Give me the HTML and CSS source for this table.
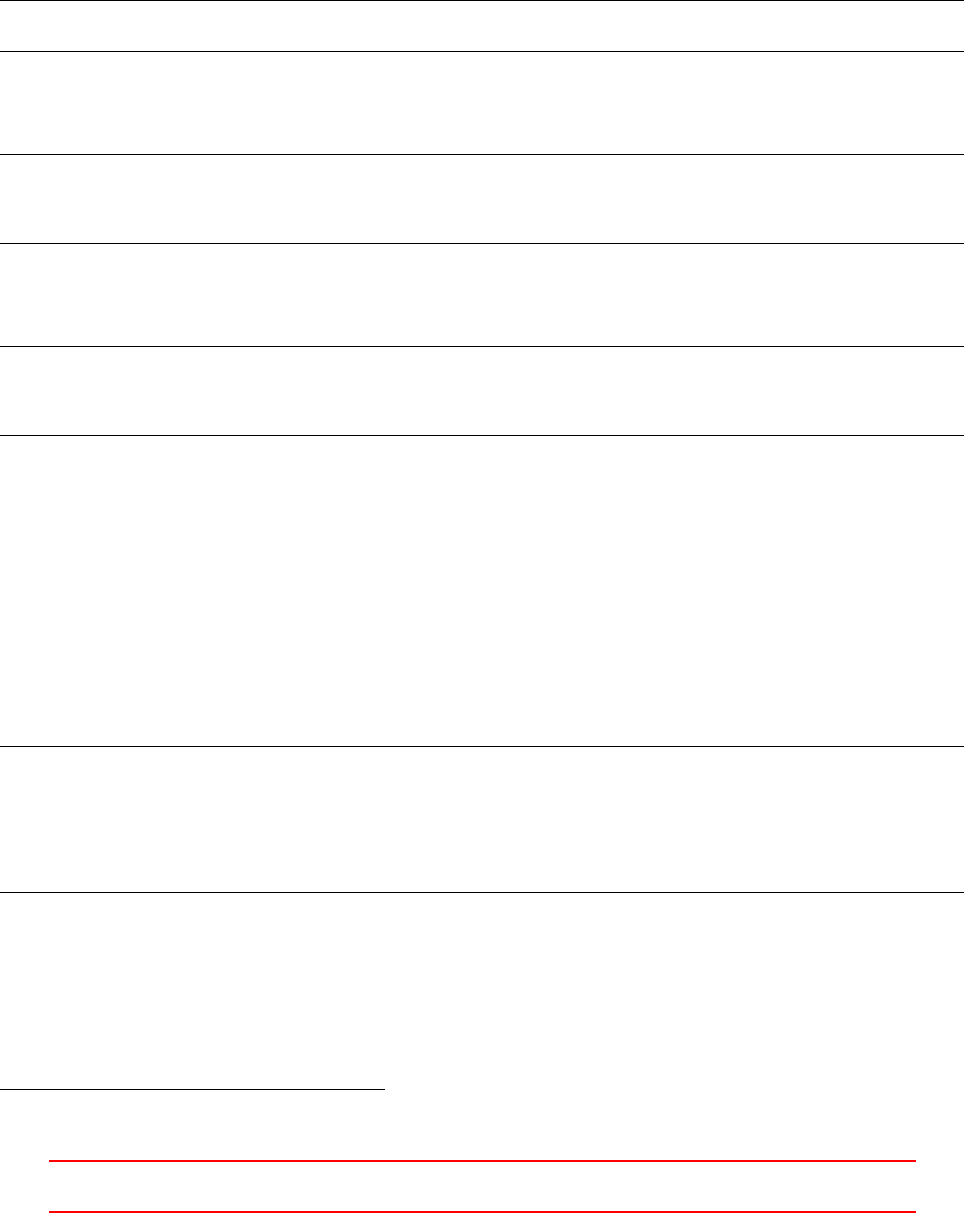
FILE: index.html
```html
<!DOCTYPE html>
<html lang="en">
<head>
    <meta charset="UTF-8">
    <meta name="viewport" content="width=device-width, initial-scale=1.0">
    <title>Document</title>
    <link rel="stylesheet" href="styles.css">
</head>
<body>
    <div class="sheet">
        <div class="row row-head"></div>
        <div class="row row-tall"></div>
        <div class="row row-short"></div>
        <div class="row row-tall"></div>
        <div class="row row-short"></div>
        <div class="row row-big"></div>
        <div class="row row-mid"></div>
    </div>

    <!-- separador de notas -->
    <div class="footnote-rule"></div>

    <div class="alert-box"></div>
</body>
</html>
```

FILE: styles.css
```css
:root {
    --line-color: #000000;
    --alert-color: #ff0000;
}

body, html {
    margin: 0;
    padding: 0;
    font-family: 'Liberation Sans', Arial, sans-serif;
    background: #ffffff;
}

.sheet {
    border-top: 1px solid var(--line-color);
}

.row {
    box-sizing: border-box;
    border-bottom: 1px solid var(--line-color);
}

.row-head {
    height: 51px;
}

.row-tall {
    height: 103px;
}

.row-short {
    height: 89px;
}

.row-big {
    height: 311px;
}

.row-mid {
    height: 146px;
}

.footnote-rule {
    width: 385px;
    height: 0;
    border-top: 1px solid var(--line-color);
    margin-top: 196px;
}

.alert-box {
    box-sizing: border-box;
    margin: 70px 0 0 49px;
    width: 867px;
    height: 53px;
    border-top: 2px solid var(--alert-color);
    border-bottom: 2px solid var(--alert-color);
}
```
